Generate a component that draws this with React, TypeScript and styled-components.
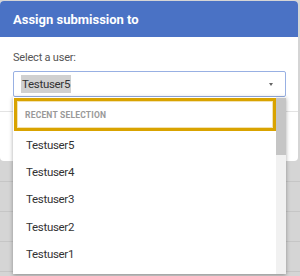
import styled, { createGlobalStyle } from 'styled-components';

const GlobalStyle = createGlobalStyle`
  html, body {
    margin: 0;
    padding: 0;
  }
  body {
    width: 300px;
    height: 276px;
    overflow: hidden;
    font-family: Roboto, "Liberation Sans", Arial, sans-serif;
  }
`;

const Page = styled.div`
  position: relative;
  width: 300px;
  height: 276px;
  background: #d5d5d5;
  overflow: hidden;
`;

const Backdrop = styled.div`
  display: flex;
  flex-direction: column;
  padding-top: 152px;
`;

const BackdropRow = styled.div`
  height: 29px;
  border-bottom: 1px solid #c6c6c6;
`;

const Dialog = styled.div`
  position: absolute;
  left: 0;
  top: 1px;
  width: 298px;
  height: 160px;
  background: #fff;
  border-radius: 4px;
  overflow: hidden;
  display: flex;
  flex-direction: column;
`;

const Header = styled.div`
  height: 36px;
  background: #4a72c5;
  color: #fff;
  font-weight: 700;
  font-size: 13px;
  display: flex;
  align-items: center;
  padding: 0 13px;
  box-sizing: border-box;
`;

const Body = styled.div`
  padding: 14px 12px 0 13px;
  height: 75px;
  box-sizing: border-box;
  border-bottom: 1px solid #e3e3e3;
`;

const Label = styled.div`
  font-size: 11px;
  color: #555;
  letter-spacing: -0.2px;
  margin-bottom: 7px;
`;

const Select = styled.div`
  height: 26px;
  border: 1px solid #98b0e3;
  border-radius: 2px;
  display: flex;
  align-items: center;
  justify-content: space-between;
  padding: 0 7px;
  box-sizing: border-box;
  width: 273px;
`;

const Value = styled.span`
  background: #d0d0d0;
  color: #333;
  font-size: 11.5px;
  letter-spacing: -0.3px;
  padding: 2px 1px;
`;

const Caret = styled.span`
  width: 0;
  height: 0;
  border-left: 2.5px solid transparent;
  border-right: 2.5px solid transparent;
  border-top: 3px solid #666;
  margin-right: 5px;
`;

const Dropdown = styled.div`
  position: absolute;
  left: 13px;
  top: 97px;
  width: 273px;
  height: 177px;
  background: #fff;
  box-shadow: 0 1px 4px rgba(0, 0, 0, 0.35);
  display: flex;
`;

const List = styled.div`
  flex: 1;
  display: flex;
  flex-direction: column;
  padding: 1px 0 0 1px;
`;

const GroupTitle = styled.div`
  height: 33px;
  box-sizing: border-box;
  border: 3.5px solid #d9a300;
  box-shadow: inset 0 0 0 1px #f3e2b0;
  display: flex;
  align-items: center;
  padding-left: 8px;
  font-size: 8.5px;
  font-weight: 700;
  letter-spacing: 0.2px;
  color: #999;
`;

const Option = styled.div`
  height: 27.3px;
  display: flex;
  align-items: center;
  padding-left: 12px;
  font-size: 11.5px;
  letter-spacing: -0.3px;
  color: #333;
`;

const ScrollTrack = styled.div`
  width: 10px;
  background: #f1f1f1;
  display: flex;
  flex-direction: column;
`;

const ScrollThumb = styled.div`
  height: 57px;
  margin-top: 1px;
  background: #c5c5c5;
`;

const users = ['Testuser5', 'Testuser4', 'Testuser3', 'Testuser2', 'Testuser1'];

export default function App() {
  return (
    <Page>
      <GlobalStyle />
      <Backdrop>
        {[0, 1, 2, 3, 4].map((i) => (
          <BackdropRow key={i} />
        ))}
      </Backdrop>
      <Dialog>
        <Header>Assign submission to</Header>
        <Body>
          <Label>Select a user:</Label>
          <Select>
            <Value>Testuser5</Value>
            <Caret />
          </Select>
        </Body>
      </Dialog>
      <Dropdown>
        <List>
          <GroupTitle>RECENT SELECTION</GroupTitle>
          {users.map((u) => (
            <Option key={u}>{u}</Option>
          ))}
        </List>
        <ScrollTrack>
          <ScrollThumb />
        </ScrollTrack>
      </Dropdown>
    </Page>
  );
}
